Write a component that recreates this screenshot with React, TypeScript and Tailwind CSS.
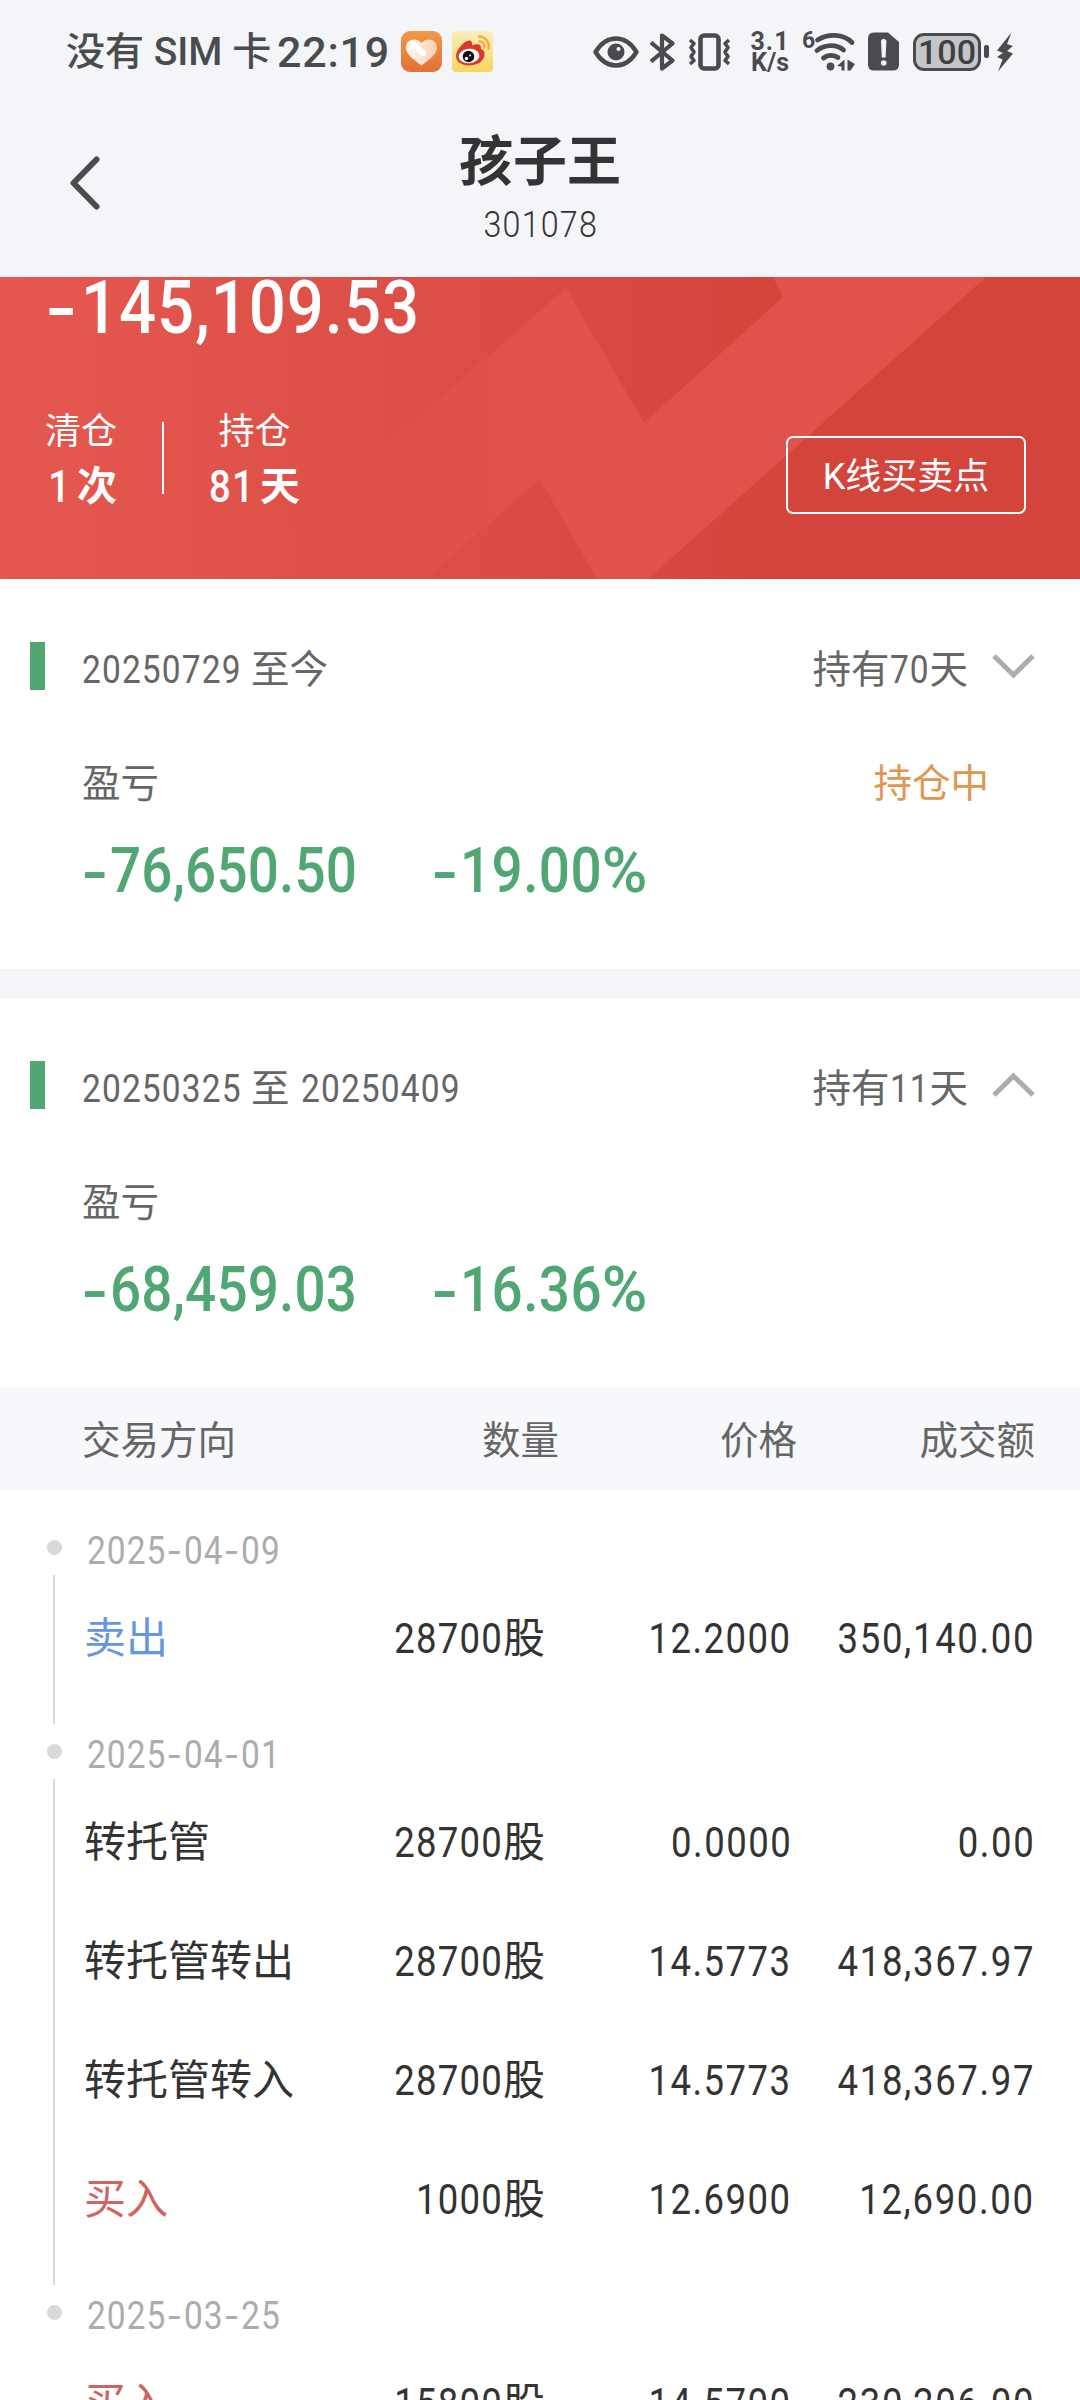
import type { ReactNode } from "react"
import clsx from "clsx"

type Trade = {
  side: string
  tone: string
  qty: string
  price: string
  amount: string
}

const DARK = "text-[#333333]"
const SELL = "text-[#6496e1]"
const BUY = "text-[#cf6560]"

const groups: { date: string; trades: Trade[] }[] = [
  {
    date: "2025-04-09",
    trades: [{ side: "卖出", tone: SELL, qty: "28700", price: "12.2000", amount: "350,140.00" }],
  },
  {
    date: "2025-04-01",
    trades: [
      { side: "转托管", tone: DARK, qty: "28700", price: "0.0000", amount: "0.00" },
      { side: "转托管转出", tone: DARK, qty: "28700", price: "14.5773", amount: "418,367.97" },
      { side: "转托管转入", tone: DARK, qty: "28700", price: "14.5773", amount: "418,367.97" },
      { side: "买入", tone: BUY, qty: "1000", price: "12.6900", amount: "12,690.00" },
    ],
  },
  {
    date: "2025-03-25",
    trades: [{ side: "买入", tone: BUY, qty: "15800", price: "14.5700", amount: "230,206.00" }],
  },
]

// Condensed figures, the parent decides how much room they take
function Num({ children, className }: { children: ReactNode; className?: string }) {
  return (
    <span className={clsx("inline-block scale-x-[0.87] whitespace-nowrap", className)}>{children}</span>
  )
}

function StatusBar() {
  return (
    <div className="flex h-[103px] items-center pl-[66px] text-[#4a4b4d]">
      <div className="w-[211px] whitespace-nowrap text-[39px] font-medium leading-[48px]">
        没有 SIM 卡
      </div>
      <div className="w-[124px] text-[43px] font-medium leading-[48px] tracking-[0.8px]">22:19</div>

      <svg width="41" height="41" viewBox="0 0 41 41">
        <defs>
          <linearGradient id="heartBg" x1="0" y1="0" x2="0" y2="1">
            <stop offset="0" stopColor="#f09a4a" />
            <stop offset="1" stopColor="#e66f35" />
          </linearGradient>
          <linearGradient id="heartFill" x1="0" y1="0" x2="1" y2="0">
            <stop offset="0" stopColor="#fffaf5" />
            <stop offset="1" stopColor="#f9cfae" />
          </linearGradient>
        </defs>
        <rect width="41" height="41" rx="9" fill="url(#heartBg)" />
        <path
          d="M20.5 34.500C17 31.500 5 24.500 5 17C5 8 15 6 20.500 12C26 6 36 8 36 17C36 24.500 24 31.500 20.500 34.500Z"
          fill="url(#heartFill)"
        />
        <path d="M13 14L22 22" stroke="#fff" strokeWidth="6" strokeLinecap="round" />
      </svg>

      <svg className="ml-[10px]" width="41" height="41" viewBox="0 0 41 41">
        <defs>
          <linearGradient id="weiboBg" x1="0" y1="0" x2="0" y2="1">
            <stop offset="0" stopColor="#fbeebc" />
            <stop offset="1" stopColor="#f8d55c" />
          </linearGradient>
        </defs>
        <rect width="41" height="41" rx="4" fill="url(#weiboBg)" />
        <path
          d="M4 25C4 19 12 10 17 9.500C20 9.500 20.500 12 20 14.500C24 12.500 30 12.500 29 18C32 19 33 21 32.500 24C32 31 24 34.500 17 34.500C10 34.500 4 31 4 25Z"
          fill="#d93a2b"
        />
        <ellipse cx="17" cy="25" rx="10.500" ry="7.200" fill="#fff" transform="rotate(-6 17 25)" />
        <circle cx="16.500" cy="25.500" r="5.800" fill="#111" />
        <circle cx="14.500" cy="27.500" r="1.700" fill="#fff" />
        <circle cx="18" cy="24.500" r="0.900" fill="#fff" />
        <path
          d="M27 5.500C33 5.500 38 11 36.500 17.500M27.500 10.500C31 10.500 33 13 32 16.500"
          fill="none"
          stroke="#eeb048"
          strokeWidth="2.600"
          strokeLinecap="round"
        />
      </svg>

      {/* eye */}
      <svg className="ml-[100px]" width="46" height="32" viewBox="0 0 46 32">
        <path
          d="M2.500 16C8 7 15 2.500 23 2.500S38 7 43.500 16C38 25 31 29.500 23 29.500S8 25 2.500 16Z"
          fill="none"
          stroke="currentColor"
          strokeWidth="4.400"
          strokeLinejoin="round"
        />
        <circle cx="23" cy="16" r="8.500" fill="currentColor" />
        <circle cx="25.500" cy="13" r="2" fill="#f4f5f9" />
      </svg>

      {/* bluetooth */}
      <svg className="ml-[10px]" width="27" height="40" viewBox="0 0 27 40">
        <path
          d="M2 10.500L23.500 28.500L13 36.500V3.500L23.500 11.500L2 29.500"
          fill="none"
          stroke="currentColor"
          strokeWidth="4.200"
          strokeLinejoin="round"
        />
      </svg>

      {/* vibrate */}
      <svg className="ml-[12px]" width="43" height="40" viewBox="0 0 43 40">
        <rect x="12.500" y="3.500" width="18" height="33" rx="3.500" fill="none" stroke="currentColor" strokeWidth="4.600" />
        <path
          d="M2 8L6 11.500L3 15.500L6 20L3 24.500L6 28.500L2 32M41 8L37 11.500L40 15.500L37 20L40 24.500L37 28.500L41 32"
          fill="none"
          stroke="currentColor"
          strokeWidth="3.600"
          strokeLinejoin="round"
        />
      </svg>

      <div className="ml-[18px] w-[42px] text-center text-[25px] font-bold leading-[21px]">
        <div className="tracking-[1px]">3.1</div>
        <div>K/s</div>
      </div>

      {/* wifi 6 */}
      <div className="relative ml-[12px] flex">
        <span className="absolute -left-[1px] -top-[3px] text-[23px] font-bold leading-[23px]">6</span>
        <svg width="53" height="40" viewBox="0 0 53 40">
          <g fill="none" stroke="currentColor" strokeWidth="4.800" strokeLinecap="round">
            <path d="M14.500 8C25 1.500 40 1.500 49 10.500" />
            <path d="M14 18.500C22 12 34 12 40.500 18" />
            <path d="M20.500 26C25 22.500 31 22.500 35 25.500" />
          </g>
          <circle cx="27.500" cy="34.500" r="3.900" fill="currentColor" />
          <path d="M41.500 27.500V38.500H38.500V34.500L34 34Z M44.500 27.500V38.500H47.500L52 32Z" fill="currentColor" />
        </svg>
      </div>

      {/* sim missing */}
      <svg className="ml-[12px]" width="31" height="39" viewBox="0 0 31 39">
        <path d="M6 0.500H20L31 10V32.500Q31 38.500 25 38.500H6Q0 38.500 0 32.500V6.500Q0 0.500 6 0.500Z" fill="currentColor" />
        <path d="M13 9.500Q13 7 15.700 7T18.400 9.500L17.600 25.500H13.800Z" fill="#f4f5f9" />
        <circle cx="15.700" cy="31" r="2.800" fill="#f4f5f9" />
      </svg>

      <div className="ml-[14px] flex h-[38px] w-[68px] items-center justify-center rounded-[11px] border-[3.500px] border-[#4a4b4d] bg-[#c4c5c8]">
        <span className="text-[34px] font-medium leading-[32px] text-[#3f4042]">100</span>
      </div>
      <div className="ml-[3px] h-[13px] w-[5px] rounded-[2px] bg-[#4a4b4d]" />
      <svg className="ml-[8px]" width="16" height="40" viewBox="0 0 16 40">
        <path d="M14.500 0.500L0 18.500L6 21L0 25L5.500 27.500L1 39.500L16 21.500L10 19L16 14L10 12Z" fill="currentColor" />
      </svg>
    </div>
  )
}

function Header() {
  return (
    <div className="grid h-[174px] grid-cols-[1fr_auto_1fr] pt-[31px]">
      <svg className="ml-[68px] mt-[21px]" width="34" height="56" viewBox="0 0 34 56">
        <path d="M28.500 4.500L5.500 28L28.500 51.500" fill="none" stroke="#4a4b4d" strokeWidth="6" strokeLinecap="round" strokeLinejoin="round" />
      </svg>
      <div className="flex flex-col items-center text-[#333333]">
        <h1 className="mt-px text-[54px] font-bold leading-[56px]">孩子王</h1>
        <Num className="ml-px mt-[12px] text-[37px] font-light leading-[44px] tracking-[1.4px]">301078</Num>
      </div>
    </div>
  )
}

function Summary() {
  return (
    <div className="relative h-[302px] overflow-hidden bg-gradient-to-r from-[#e4584f] via-[#d94c43] via-50% to-[#d3443b] to-75% text-white">
      <svg className="absolute inset-0" width="1080" height="302" viewBox="0 277 1080 302">
        <defs>
          <linearGradient id="ray" gradientUnits="userSpaceOnUse" x1="240" y1="0" x2="560" y2="0">
            <stop offset="0" stopColor="#df534b" stopOpacity="0" />
            <stop offset="1" stopColor="#df534b" />
          </linearGradient>
        </defs>
        <path d="M566 288L644 423L783 297L773 277H986L648 579H597L540 479L426 579H234Z" fill="url(#ray)" />
      </svg>

      <div className="relative">
        <div className="flex h-[60px] items-center pl-[46px] text-[75px] font-medium leading-[60px]">
          <span className="mt-[2px] w-[35px] origin-left scale-x-[1.2]">-</span>
          <Num className="origin-left tracking-[1.1px]">145,109.53</Num>
        </div>

        <div className="mt-[72px] flex pl-[45px]">
          <div className="flex w-[72px] flex-col items-center">
            <span className="mt-[2px] text-[36px] leading-[42px]">清仓</span>
            <div className="mt-[10px] flex w-full justify-end text-[40px] font-bold leading-[48px]">
              <Num className="mr-[7px] origin-right text-[44px] font-medium">1</Num>次
            </div>
          </div>
          <div className="ml-[45px] mt-[13px] h-[72px] w-[2px] bg-white" />
          <div className="ml-[45px] flex w-[91px] flex-col items-center">
            <span className="mt-[2px] text-[36px] leading-[42px]">持仓</span>
            <div className="mt-[10px] flex w-full justify-end text-[40px] font-bold leading-[48px]">
              <Num className="mr-[5px] origin-right text-[44px] font-medium tracking-[1.5px]">81</Num>天
            </div>
          </div>
          <button className="ml-auto mr-[54px] mt-[27px] flex h-[78px] w-[240px] items-center justify-center whitespace-nowrap rounded-[7px] border-2 border-white pt-[4px] text-[36px] leading-[44px]">
            <span>K</span>线买卖点
          </button>
        </div>
      </div>
    </div>
  )
}

type PeriodProps = {
  from: string
  to?: string
  days: string
  amount: string
  percent: string
  open?: boolean
  holding?: boolean
}

function Period({ from, to, days, amount, percent, open, holding }: PeriodProps) {
  return (
    <section className="h-[389.500px] bg-white pt-[63px] text-[38.500px] leading-[48px] text-[#666666]">
      <div className="flex items-center pl-[30px] pr-[45px]">
        <div className="h-12 w-[15px] self-start bg-[#50a774]" />
        <div className="ml-[37px] mt-[4px] flex">
          <Num className="w-[169px] origin-left tracking-[1.3px]">{from}</Num>
          {to ? (
            <>
              至<Num className="ml-[11px] origin-left tracking-[1.3px]">{to}</Num>
            </>
          ) : (
            "至今"
          )}
        </div>
        <div className="ml-auto mt-[4px] flex">
          持有
          <span className="flex w-[40px] justify-center">
            <Num className="tracking-[1px]">{days}</Num>
          </span>
          天
        </div>
        <svg className={clsx("mb-[4px] ml-[24px]", open && "rotate-180")} width="43" height="26" viewBox="0 0 43 26">
          <path d="M2 3L21.500 22L41 3" fill="none" stroke="#acacac" strokeWidth="5" />
        </svg>
      </div>

      <div className="mt-[66px] flex justify-between pl-[82px] pr-[91px]">
        <span>盈亏</span>
        {holding && <span className="text-[#e0964c]">持仓中</span>}
      </div>

      <div className="mt-[29px] flex pl-[82px] text-[63px] font-medium leading-[68px] text-[#50a774]">
        <span className="mt-[2px] w-[28px] origin-left scale-x-[1.2]">-</span>
        <Num className="w-[322px] origin-left tracking-[0.2px]">{amount}</Num>
        <span className="mt-[2px] w-[28px] origin-left scale-x-[1.2]">-</span>
        <Num className="origin-left tracking-[0.5px]">
          {percent}
          <span className="inline-block origin-left scale-x-[1.13]">%</span>
        </Num>
      </div>
    </section>
  )
}

function TradeRow({ side, tone, qty, price, amount }: Trade) {
  return (
    <div className="grid h-[119px] grid-cols-[260px_201px_247px_243px] items-center pt-[2px] text-[42px] leading-[50px] text-[#333333]">
      <span className={clsx("whitespace-nowrap", tone)}>{side}</span>
      <div className="flex justify-end">
        <Num className="origin-right tracking-[1.4px]">{qty}</Num>股
      </div>
      <div className="flex justify-end">
        <Num className="origin-right tracking-[1.7px]">{price}</Num>
      </div>
      <div className="flex justify-end">
        <Num className="origin-right tracking-[1.9px]">{amount}</Num>
      </div>
    </div>
  )
}

function TradeDate({ date }: { date: string }) {
  const [year, month, day] = date.split("-")
  const dash = <span className="inline-block w-[20px] scale-x-[1.35] text-center">-</span>
  return (
    <div className="flex h-14 items-center pl-[3px] pt-[2px] text-[38.500px] leading-[48px] text-[#acacac]">
      <Num className="origin-left tracking-[1.2px]">
        {year}{dash}{month}{dash}{day}
      </Num>
    </div>
  )
}

function TradeTable() {
  return (
    <div>
      <div className="grid h-[103px] grid-cols-[200px_277px_238px_238px] items-center bg-[#f7f8fc] pl-[82px] pt-[4px] text-[38.500px] leading-[48px] text-[#666666]">
        <span>交易方向</span>
        <span className="text-right">数量</span>
        <span className="text-right">价格</span>
        <span className="text-right">成交额</span>
      </div>

      <div className="pt-8">
        {groups.map((group, i) => (
          <div key={group.date} className="flex">
            <div className="flex w-[84px] flex-col items-center pl-[24px] pt-[18px]">
              <div className="size-[15px] rounded-full bg-[#d9d9d9]" />
              {i < groups.length - 1 && <div className="mb-[2px] mt-5 w-[2px] flex-1 bg-[#d9d9d9]" />}
            </div>
            <div className="pb-[29px]">
              <TradeDate date={group.date} />
              {group.trades.map((trade, j) => (
                <TradeRow key={j} {...trade} />
              ))}
            </div>
          </div>
        ))}
      </div>
    </div>
  )
}

export default function App() {
  return (
    <div className="h-[2400px] w-[1080px] overflow-hidden bg-white [font-family:Roboto,'Noto_Sans_CJK_SC',sans-serif]">
      <div className="bg-[#f4f5f9]">
        <StatusBar />
        <Header />
      </div>
      <Summary />
      <Period from="20250729" days="70" amount="76,650.50" percent="19.00" holding />
      <div className="h-[29px] bg-[#f4f5f9]" />
      <Period from="20250325" to="20250409" days="11" amount="68,459.03" percent="16.36" open />
      <TradeTable />
    </div>
  )
}
